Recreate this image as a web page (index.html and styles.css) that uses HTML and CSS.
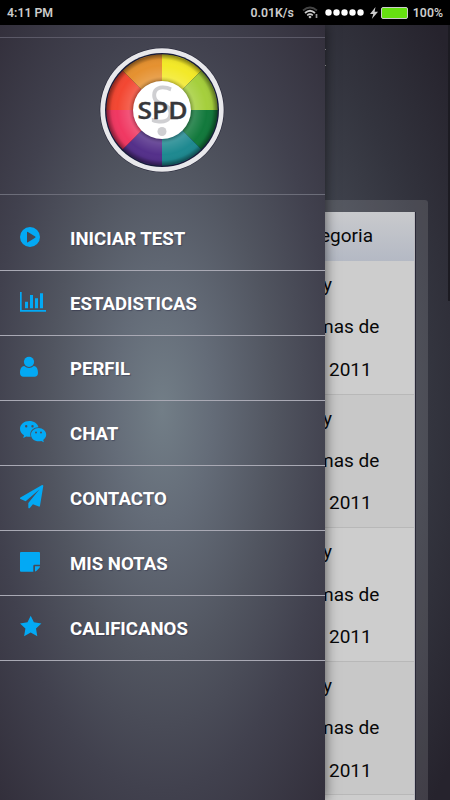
FILE: index.html
```html
<!DOCTYPE html>
<html lang="es">

<head>
    <meta charset="UTF-8">
    <meta name="viewport" content="width=device-width, initial-scale=1.0">
    <title>SPD</title>
    <link rel="stylesheet" href="styles.css">
</head>

<body>
    <div class="status">
        <span class="time">4:11 PM</span>
        <span class="speed">0.01K/s</span>
        <svg class="wifi" width="17" height="13" viewBox="0 0 17 13" fill="none" stroke="#ccc" stroke-width="1.7">
            <path d="M1 4.5Q8 -1.5 15 4.5" stroke="#444" />
            <path d="M3 7Q8 2.5 13 7" />
            <path d="M5.2 9.3Q8 7 10.8 9.3" />
            <path d="M8 9.5l1.6 1.4L8 12.5l-1.6-1.6z" fill="#ccc" stroke="none" />
            <path d="M14.5 8v4" stroke="#999" />
        </svg>
        <svg class="dots" width="39" height="7" viewBox="0 0 39 7" fill="#fff">
            <circle cx="3.5" cy="3.5" r="3.2" />
            <circle cx="11.5" cy="3.5" r="3.2" />
            <circle cx="19.5" cy="3.5" r="3.2" />
            <circle cx="27.5" cy="3.5" r="3.2" />
            <circle cx="35.5" cy="3.5" r="3.2" />
        </svg>
        <svg class="bolt" width="8" height="12" viewBox="0 0 8 12" fill="#ccc">
            <path d="M5.5 0L0 7h3.3L1.8 12 8 4.8H4.6z" />
        </svg>
        <div class="battery"></div>
        <span class="percent">100%</span>
    </div>

    <div class="section">
        <div class="page">
            <div class="title"></div>
            <div class="panel">
                <div class="table">
                    <div class="head">egoria</div>
                    <div class="row">
                        <p class="l1">y</p>
                        <p class="l2">mas de</p>
                        <p class="l3">2011</p>
                    </div>
                    <div class="row even">
                        <p class="l1">y</p>
                        <p class="l2">mas de</p>
                        <p class="l3">2011</p>
                    </div>
                    <div class="row">
                        <p class="l1">y</p>
                        <p class="l2">mas de</p>
                        <p class="l3">2011</p>
                    </div>
                    <div class="row even">
                        <p class="l1">y</p>
                        <p class="l2">mas de</p>
                        <p class="l3">2011</p>
                    </div>
                    <div class="row"></div>
                </div>
            </div>
            <div class="scroll"></div>
        </div>

        <div class="menu">
            <div class="logo">
                <svg width="126" height="126" viewBox="-63 -63 126 126">
                    <defs>
                        <radialGradient id="shade" gradientUnits="userSpaceOnUse" cx="0" cy="0" r="56">
                            <stop offset=".5" stop-color="#000" stop-opacity=".35" />
                            <stop offset=".6" stop-color="#fff" stop-opacity=".14" />
                            <stop offset=".8" stop-color="#fff" stop-opacity="0" />
                            <stop offset=".9" stop-color="#000" stop-opacity=".04" />
                            <stop offset="1" stop-color="#000" stop-opacity=".5" />
                        </radialGradient>
                    </defs>
                    <circle r="62.3" fill="#202033" />
                    <circle r="61.7" fill="#e8e8eb" />
                    <circle r="57" fill="#171c3a" />
                    <path d="M0 0V-55.5A55.5 55.5 0 0 1 39.2-39.2z" fill="#f3e928" />
                    <path d="M0 0L39.2-39.2A55.5 55.5 0 0 1 55.5 0z" fill="#a5cf3c" />
                    <path d="M0 0H55.5A55.5 55.5 0 0 1 39.2 39.2z" fill="#12793c" />
                    <path d="M0 0L39.2 39.2A55.5 55.5 0 0 1 0 55.5z" fill="#1e8990" />
                    <path d="M0 0V55.5A55.5 55.5 0 0 1-39.2 39.2z" fill="#54308a" />
                    <path d="M0 0L-39.2 39.2A55.5 55.5 0 0 1-55.5 0z" fill="#f03862" />
                    <path d="M0 0H-55.5A55.5 55.5 0 0 1-39.2-39.2z" fill="#f34732" />
                    <path d="M0 0L-39.2-39.2A55.5 55.5 0 0 1 0-55.5z" fill="#e59130" />
                    <circle r="55.5" fill="url(#shade)" />
                    <circle r="29" fill="#fff" />
                    <text class="mark" transform="translate(0 12.5) scale(.88 1)" text-anchor="middle">S</text>
                    <circle cx="0" cy="21.5" r="4.5" fill="#cfcfd2" />
                    <text class="brand" x=".5" y="8.8" text-anchor="middle" textLength="50" lengthAdjust="spacingAndGlyphs">SPD</text>
                </svg>
            </div>

            <div class="item">
                <svg class="icon" viewBox="0 0 28 24">
                    <path fill-rule="evenodd" d="M10 1a10 10 0 1 1 0 20a10 10 0 1 1 0-20zM7 6.2v9.6q0 1 .9.5l7.3-4.5q.8-.6 0-1.2L7.9 5.9q-.9-.6-.9.3z" />
                </svg>
                <span>INICIAR TEST</span>
            </div>
            <div class="item">
                <svg class="icon" viewBox="0 0 28 24">
                    <path d="M0 1h1.7v18H26v1.8H0zM5 10.7h3v6.6H5zM10 4h3v13.3h-3zM15 7.3h3v10h-3zM20 2.3h3v15h-3z" />
                </svg>
                <span>ESTADISTICAS</span>
            </div>
            <div class="item">
                <svg class="icon" viewBox="0 0 28 24">
                    <circle cx="9" cy="5.8" r="5.1" />
                    <path d="M4.2 9.9Q9 14.2 13.8 9.9C17 10.2 18 13.5 18 17c0 2.3-1.3 3.8-3.5 3.8h-11C1.3 20.8 0 19.3 0 17c0-3.5 1-6.8 4.2-7.1z" />
                </svg>
                <span>PERFIL</span>
            </div>
            <div class="item">
                <svg class="icon" viewBox="0 0 28 24">
                    <path fill-rule="evenodd" d="M9.3 0C14 0 17.7 2.6 18.5 6.3C14 6.2 10.3 9.3 10.3 13.3q0 1.2.4 2.4q-2.2.3-4.4-.3L3.2 17l.8-2.7C1.5 12.8 0 10.5 0 8c0-4.5 4.2-8 9.3-8zM6.2 4a1.2 1.2 0 1 0 0 2.4a1.2 1.2 0 0 0 0-2.4zM12.5 4a1.2 1.2 0 1 0 0 2.4a1.2 1.2 0 0 0 0-2.4z" />
                    <path fill-rule="evenodd" d="M18.6 7c4.2 0 7.6 3 7.6 6.7c0 2-1.2 3.9-3 5.2l.7 2.4l-2.6-1.4c-5.4 1.6-10.3-1.9-10.3-6.2c0-3.7 3.4-6.7 7.6-6.7zM16 10.6a1 1 0 1 0 0 2a1 1 0 0 0 0-2zM21 10.6a1 1 0 1 0 0 2a1 1 0 0 0 0-2z" />
                </svg>
                <span>CHAT</span>
            </div>
            <div class="item">
                <svg class="icon" viewBox="0 0 28 24">
                    <path transform="translate(0 -1) scale(.013)" d="M1764 11q33 24 27 64l-256 1536q-5 29-32 45-14 8-31 8-11 0-24-5l-453-185-242 295q-18 23-49 23-13 0-22-4-19-7-30.5-23.5t-11.5-36.5v-349l864-1059-1069 925-395-162q-37-14-40-55-2-40 32-59l1664-960q15-9 32-9 20 0 36 11z" />
                </svg>
                <span>CONTACTO</span>
            </div>
            <div class="item">
                <svg class="icon" viewBox="0 0 28 24">
                    <path d="M1 1h18q1 0 1 1v11.7h-5.5q-1.2 0-1.2 1.2v5.8H1q-1 0-1-1V2q0-1 1-1zM15 15.3h5q0 1-.8 1.8l-2.6 2.6q-.7.7-1.6.9z" />
                </svg>
                <span>MIS NOTAS</span>
            </div>
            <div class="item">
                <svg class="icon" viewBox="0 0 28 24">
                    <path d="M10.7-.3L13.9 6.3L21.4 7.4L16 12.6L17.3 20.2L10.7 16.6L4.1 20.2L5.4 12.6L0 7.4L7.5 6.3z" />
                </svg>
                <span>CALIFICANOS</span>
            </div>
        </div>
    </div>
</body>

</html>
```

FILE: styles.css
```css
* {
    padding: 0;
    margin: 0;
    box-sizing: border-box;
}

body {
    height: 100vh;
    overflow: hidden;
    background-color: #000;
    font-family: Roboto, "Liberation Sans", sans-serif;
}

/* status bar */
.status {
    height: 25px;
    padding: 0 7px;
    display: flex;
    align-items: center;
    color: #ccc;
    font-size: 12.3px;
    font-weight: 600;
}

.time {
    margin-right: auto;
}

.wifi {
    margin-left: 8px;
}

.dots {
    margin-left: 6px;
}

.bolt {
    margin-left: 6px;
}

.battery {
    width: 27px;
    height: 12px;
    margin: 0 5px 0 3px;
    border: 1px solid #ccc;
    border-radius: 2px;
    background-color: #66e011;
}

/* layout */
.section {
    position: relative;
    height: calc(100vh - 25px);
    overflow: hidden;
}

.page {
    height: 100%;
    padding: 24px 0 0 325px;
    background: radial-gradient(ellipse 290px 560px at 225px 385px, #525c64 0%, #494e58 35%, #33343e 72%, #26232d 100%);
}

.title {
    width: 1px;
    height: 17px;
    margin-bottom: 134px;
    border-top: 1px solid #aaa;
    border-bottom: 1px solid #aaa;
}

.panel {
    width: 103px;
    padding: 12px 13px 0 0;
    border-radius: 0 3px 0 0;
    background-color: rgba(255, 255, 255, 0.12);
}

.table {
    background-color: #cdcdcd;
    border-right: 1px solid #b8b8bd;
    box-shadow: 1px 0 0 #292837;
    color: #080808;
    font-size: 19px;
}

.head {
    height: 49px;
    line-height: 48px;
    margin-left: -5px;
    background: linear-gradient(#c9cacd, #b4b9c4);
}

.row {
    height: 133.6px;
    padding-top: 3px;
    border-bottom: 1px solid #b8b8b8;
    line-height: 42.4px;
    white-space: nowrap;
}

.even {
    background-color: #c8c8c8;
}

.l1 {
    margin-left: -2px;
}

.l2 {
    margin-left: -8px;
}

.l3 {
    margin-left: 4px;
}

.scroll {
    position: absolute;
    top: 0;
    right: 0;
    width: 2px;
    height: 276px;
    background-color: #1c1b22;
}

/* side menu */
.menu {
    position: absolute;
    top: 0;
    left: 0;
    width: 325px;
    height: 100%;
    padding-top: 12px;
    background: radial-gradient(ellipse 250px 560px at 162px 385px, #727e87 0%, #646c78 20%, #515560 45%, #41414e 68%, #302c38 100%);
    box-shadow: 0 0 12px rgba(0, 0, 0, 0.6);
}

.logo {
    height: 158px;
    margin-bottom: 11px;
    display: flex;
    justify-content: center;
    padding: 9px 1px 0 0;
    border-top: 1px solid #5b5967;
    border-bottom: 1px solid #6c6d79;
}

.mark {
    font-family: "Open Sans", sans-serif;
    font-size: 52px;
    fill: #cfcfd2;
}

.brand {
    font-family: "Open Sans", sans-serif;
    font-size: 24px;
    font-weight: 600;
    fill: #37373a;
    stroke: #37373a;
    stroke-width: 0.4px;
}

.item {
    height: 65px;
    display: flex;
    align-items: center;
    padding-left: 20px;
    border-bottom: 1px solid #a9a9b4;
    color: #fff;
    font-size: 18.6px;
    font-weight: 700;
    text-shadow: 1px 1px 1px rgba(30, 30, 60, 0.4);
}

.item span {
    padding-top: 2px;
}

.icon {
    width: 28px;
    height: 24px;
    margin-right: 22px;
    fill: #03a9f4;
    overflow: visible;
}
```
